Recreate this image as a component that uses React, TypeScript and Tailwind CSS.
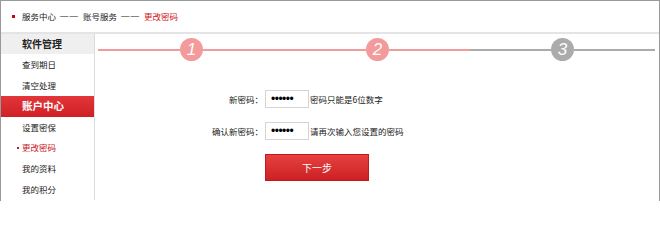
export default function App() {
  const pink = "bg-[#f39a9a]";
  return (
    <div className="w-[660px] h-[201px] overflow-hidden bg-white border-t border-l border-r border-[#9a9a9a] text-[#222] font-['Noto_Sans_CJK_SC','Liberation_Sans',sans-serif]">
      <div className="h-[31px] flex items-center pl-[11px] text-[8.5px]">
        <span className="w-[3px] h-[3px] bg-[#d0021b]" />
        <span className="ml-[7px]">服务中心</span>
        <span className="mx-[4px] tracking-[1px] font-['Liberation_Sans',sans-serif]">——</span>
        <span>账号服务</span>
        <span className="mx-[4px] tracking-[1px] font-['Liberation_Sans',sans-serif]">——</span>
        <span className="text-[#d0121b]">更改密码</span>
      </div>
      <div className="h-[2px] bg-[#e4e4e4]" />
      <div className="flex h-[166px]">
        <div className="w-[94px] border-r border-[#dcdcdc] flex flex-col">
          <div className="h-[20px] bg-[#efefef] flex items-center pl-[21px] font-bold text-[10px] text-[#222]">软件管理</div>
          <div className="h-[21px] flex items-center pl-[21px] text-[8.5px]">查到期日</div>
          <div className="h-[21px] flex items-center pl-[21px] text-[8.5px]">清空处理</div>
          <div className="h-[21px] flex items-center pl-[21px] text-[10.5px] font-bold text-white bg-gradient-to-b from-[#e2363b] to-[#cf1f25]">账户中心</div>
          <div className="h-[21px] flex items-center pl-[21px] text-[8.5px]">设置密保</div>
          <div className="h-[21px] flex items-center pl-[16px] text-[8.5px] text-[#c8161d]">
            <span className="w-[2px] h-[2px] mr-[3px] bg-[#c8161d]" />
            <span>更改密码</span>
          </div>
          <div className="h-[21px] flex items-center pl-[21px] text-[8.5px]">我的资料</div>
          <div className="h-[21px] flex items-center pl-[21px] text-[8.5px]">我的积分</div>
        </div>
        <div className="flex-1 flex flex-col">
          <div className="mt-[4px] h-[23px] flex items-center pl-[3px]">
            <div className={`w-[82px] h-[2px] ${pink}`} />
            <div className={`w-[23px] h-[23px] rounded-full ${pink} flex items-center justify-center text-white italic text-[17px] font-['Liberation_Sans',sans-serif]`}>1</div>
            <div className={`w-[163px] h-[2px] ${pink}`} />
            <div className={`w-[23px] h-[23px] rounded-full ${pink} flex items-center justify-center text-white italic text-[17px] font-['Liberation_Sans',sans-serif]`}>2</div>
            <div className={`w-[81px] h-[2px] ${pink}`} />
            <div className="w-[81px] h-[2px] bg-[#ababab]" />
            <div className="w-[23px] h-[23px] rounded-full bg-[#ababab] flex items-center justify-center text-white italic text-[17px] font-['Liberation_Sans',sans-serif]">3</div>
            <div className="w-[81px] h-[2px] bg-[#ababab]" />
          </div>
          <div className="mt-[29px] h-[18px] flex items-center text-[8.5px]">
            <span className="w-[168px] text-right">新密码：</span>
            <div className="ml-[2px] w-[44px] h-[18px] border border-[#d5d5d5] flex items-center pl-[5px] text-[12px] text-black font-['Liberation_Sans',sans-serif] tracking-[-0.5px]">••••••</div>
            <span className="ml-[1px]">密码只能是6位数字</span>
          </div>
          <div className="mt-[14px] h-[18px] flex items-center text-[8.5px]">
            <span className="w-[168px] text-right">确认新密码：</span>
            <div className="ml-[2px] w-[44px] h-[18px] border border-[#d5d5d5] flex items-center pl-[5px] text-[12px] text-black font-['Liberation_Sans',sans-serif] tracking-[-0.5px]">••••••</div>
            <span className="ml-[1px]">请再次输入您设置的密码</span>
          </div>
          <div className="mt-[14px] ml-[170px] w-[104px] h-[27px] flex items-center justify-center text-white text-[10px] bg-gradient-to-b from-[#e6403f] to-[#cc1f24] border border-[#bf1a1f]">下一步</div>
        </div>
      </div>
    </div>
  );
}
